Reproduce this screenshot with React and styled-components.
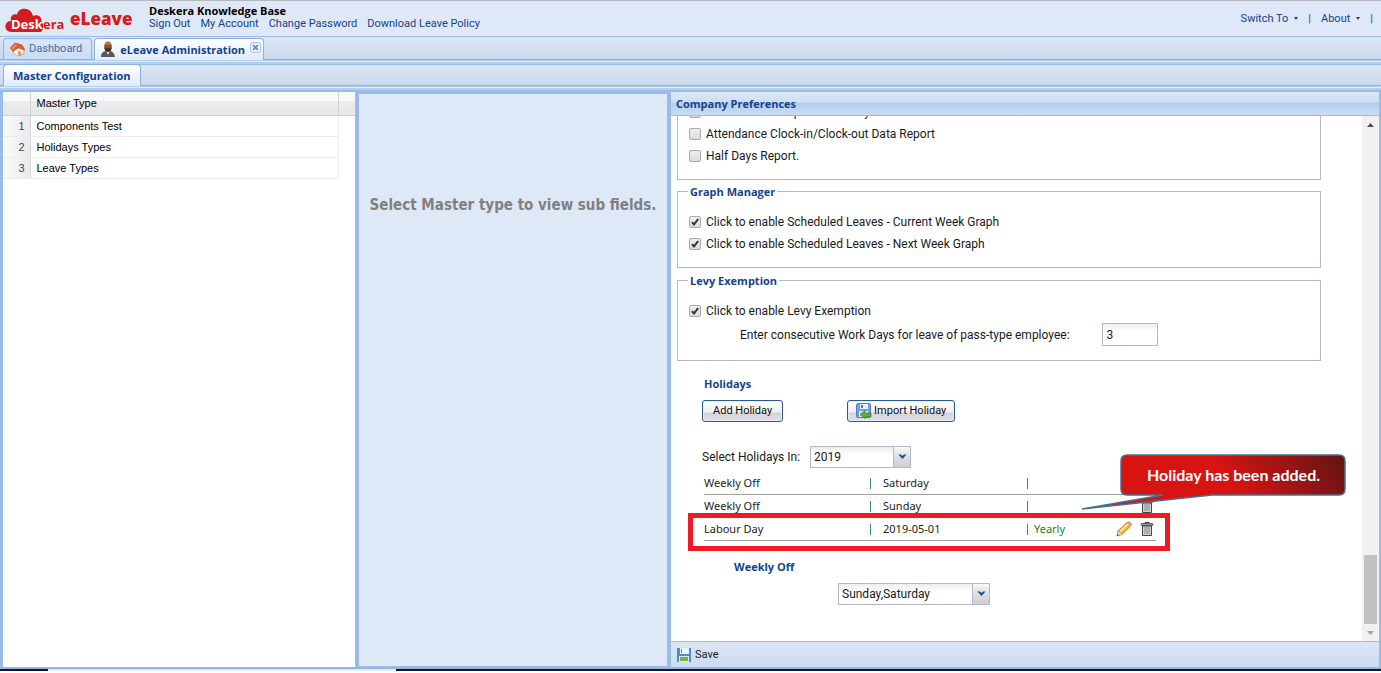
import React from 'react';
import styled, { createGlobalStyle, css } from 'styled-components';

const Global = createGlobalStyle`
  * { box-sizing: border-box; }
  body { margin: 0; background: #fff; }
  #root { font-family: Roboto, "Noto Sans", sans-serif; font-size: 11px; line-height: 16px; color: #1a1a1a; }
  button, input, select { font: inherit; color: inherit; margin: 0; }
  a { color: inherit; text-decoration: none; }
`;

const boldText = css`
  font-family: "Open Sans", "Noto Sans", sans-serif;
  font-size: 11px;
  font-weight: 700;
`;

const Page = styled.div`
  height: 100vh;
  min-height: 600px;
  display: flex;
  flex-direction: column;
  background: #dfe8f6;
  border-top: 1px solid #b5b8be;
`;

const Header = styled.header`
  flex: none;
  height: 35px;
  display: flex;
  align-items: center;
  padding: 0 8px 0 5px;
`;

const Brand = styled.div`
  width: 144px;
  height: 30px;
  display: flex;
  align-items: center;
  gap: 5px;
`;

const BrandText = styled.span`
  font: 800 17px/24px "Open Sans", sans-serif;
  color: #d71920;
`;

const LogoText = styled.text`
  font: 700 13px "Open Sans", sans-serif;
`;

const Account = styled.div`
  flex: 1;
  padding-bottom: 2px;
`;

const Company = styled.div`
  ${boldText}
  line-height: 13px;
  color: #000;
`;

const LinkRow = styled.nav`
  display: flex;
  gap: 10px;
  line-height: 14px;
  color: #15428b;
`;

const MenuRow = styled.nav`
  display: flex;
  align-items: center;
  gap: 10px;
  color: #15428b;
`;

const MenuButton = styled.button`
  display: flex;
  align-items: center;
  gap: 6px;
  padding: 0;
  border: 0;
  background: none;
`;

const Caret = styled.span`
  border: 2px solid transparent;
  border-top: 3px solid #15428b;
  border-bottom: 0;
`;

const TabStrip = styled.div`
  flex: none;
  height: ${(p) => p.$height}px;
  display: flex;
  align-items: flex-end;
  gap: 2px;
  padding: 0 3px;
  border-top: 1px solid #99bbe8;
  border-bottom: 1px solid #8db2e3;
  background: linear-gradient(#dce7f6, #c9d9ec);
`;

const StripEdge = styled.div`
  flex: none;
  height: 4px;
  border-top: 1px solid #b5cdee;
  border-bottom: 2px solid #b5cdee;
  background: #deecfd;
`;

const Tab = styled.button`
  display: flex;
  align-items: center;
  gap: 3px;
  height: 21px;
  padding: 0 9px 0 5px;
  border: 1px solid #8db2e3;
  border-bottom: 0;
  border-radius: 4px 4px 0 0;
  background: linear-gradient(#d9e7f8, #c9dcf5);
  color: #416da3;
  ${(p) => p.$active && css`
    && { ${boldText} }
    height: 22px;
    margin-bottom: -1px;
    padding: 0 9px;
    background: linear-gradient(#fff, #deecfd);
    color: #15428b;
  `}
`;

const TabItem = styled.div`
  display: flex;
  align-items: flex-start;
  height: 22px;
  margin-bottom: -1px;
  padding-right: 2px;
  border: 1px solid #8db2e3;
  border-bottom: 0;
  border-radius: 4px 4px 0 0;
  background: linear-gradient(#fff, #deecfd);
`;

const TabLabel = styled.button`
  && { ${boldText} }
  display: flex;
  align-items: center;
  gap: 4px;
  height: 21px;
  padding: 0 5px;
  border: 0;
  background: none;
  color: #15428b;
`;

const CloseButton = styled.button`
  display: flex;
  width: 11px;
  height: 11px;
  margin-top: 3px;
  padding: 0;
  border: 0;
  background: none;
`;

const Workspace = styled.main`
  flex: 1;
  min-height: 0;
  display: grid;
  grid-template-columns: 352px minmax(200px, 308fr) minmax(500px, 708fr);
  gap: 4px;
  padding: 2px 2px 1px 3px;
  background: #99bbe8;
`;

const GridPanel = styled.section`
  background: #fff;
`;

const MasterTable = styled.table`
  width: 100%;
  border-collapse: collapse;
  table-layout: fixed;
  font: 11px/14px "Liberation Sans", Arial, sans-serif;
  color: #000;
`;

const HeadCell = styled.th`
  width: ${(p) => p.$width};
  height: 23px;
  padding: 0 6px;
  font-weight: 400;
  text-align: left;
  background: linear-gradient(#f9f9f9 40%, #ececee 41%, #e6e7e9);
  border-right: 1px solid #d0d0d0;
  border-bottom: 1px solid #d0d0d0;
  &:last-child { border-right: 0; }
`;

const NumberCell = styled.td`
  height: 21px;
  padding: 0 5px;
  text-align: right;
  color: #444;
  background: linear-gradient(90deg, #fbfbfb, #e9eaec);
  border-bottom: 1px solid #ededed;
  border-right: 1px solid #d5d7da;
`;

const NameCell = styled.td`
  padding: 0 6px;
  border-bottom: 1px solid #ededed;
  border-right: 1px solid #ededed;
`;

const SubPanel = styled.section`
  margin: 2px 0 1px;
  padding: 101px 8px 0;
  background: #dfe8f6;
  text-align: center;
`;

const Hint = styled.h2`
  margin: 0;
  font: 700 15px/20px "DejaVu Sans Condensed", "DejaVu Sans", sans-serif;
  color: #808080;
`;

const Preferences = styled.section`
  display: flex;
  flex-direction: column;
  min-height: 0;
  background: #fff;
`;

const PanelTitle = styled.h2`
  ${boldText}
  flex: none;
  height: 24px;
  margin: 0;
  padding: 0 5px;
  line-height: 23px;
  color: #15428b;
  background: linear-gradient(#dbe8f7, #cddff4 44%, #b5cdee 48%, #cbdcf3);
  border-bottom: 1px solid #99bbe8;
`;

const ScrollArea = styled.div`
  flex: 1;
  min-height: 0;
  display: flex;
`;

const ScrollContent = styled.div`
  flex: 1;
  min-width: 0;
  display: flex;
  flex-direction: column;
  justify-content: flex-end;
  overflow: hidden;
  padding: 0 41px 36px 6px;
  font-size: 12px;
`;

const ScrollBar = styled.div`
  flex: none;
  width: 17px;
  display: flex;
  flex-direction: column;
  justify-content: flex-end;
  align-items: center;
  background: #f1f1f1;
`;

const ScrollThumb = styled.div`
  width: 13px;
  height: 69px;
  background: #c1c1c1;
`;

const ScrollTrack = styled.div`
  flex: 1;
`;

const ScrollArrow = styled.div`
  height: 17px;
  display: flex;
  align-items: center;
`;

const Group = styled.fieldset`
  flex: none;
  min-width: 0;
  margin: 0 0 ${(p) => p.$after}px;
  padding: ${(p) => p.$top}px 11px ${(p) => p.$bottom}px;
  border: 1px solid #b5b8c8;
`;

const Legend = styled.legend`
  ${boldText}
  padding: 0 2px;
  margin-left: -1px;
  line-height: 16px;
  color: #15428b;
`;

const CheckRow = styled.label`
  display: flex;
  align-items: center;
  gap: 5px;
  height: 22px;
`;

const Check = styled.input`
  appearance: none;
  width: 12px;
  height: 12px;
  border: 1px solid #a9a9a9;
  border-radius: 2px;
  background: linear-gradient(#eee, #dcdcdc);
  &:checked {
    background: url("data:image/svg+xml,%3Csvg xmlns='http://www.w3.org/2000/svg' viewBox='0 0 10 10'%3E%3Cpath d='M2 5.2 4 7.4 8.2 2' fill='none' stroke='%23333' stroke-width='2'/%3E%3C/svg%3E"), linear-gradient(#eee, #dcdcdc);
  }
`;

const FieldRow = styled.label`
  display: flex;
  align-items: center;
  gap: 32px;
  height: 26px;
  padding-left: 51px;
`;

const NumberBox = styled.input`
  width: 56px;
  height: 23px;
  padding: 0 4px;
  border: 1px solid #b5b8c8;
  background: linear-gradient(#eceeee, #fff 8px);
`;

const Holidays = styled.section`
  flex: none;
  padding-left: 25px;
`;

const Heading = styled.h3`
  ${boldText}
  margin: 0;
  padding-left: ${(p) => p.$indent}px;
  line-height: 16px;
  color: #15428b;
`;

const ButtonRow = styled.div`
  display: flex;
  gap: 64px;
  margin: 8px 0 24px;
  font-size: 11px;
`;

const PushButton = styled.button`
  display: flex;
  align-items: center;
  justify-content: center;
  gap: 2px;
  height: 22px;
  padding: 0 ${(p) => (p.$icon ? 8 : 10)}px;
  border: 1px solid #2b5a8c;
  border-radius: 3px;
  background: linear-gradient(#fff, #f0f0f0 55%, #d4d4d8 60%, #e0e0e4);
  box-shadow: inset 0 0 0 1px #e8eef5;
  color: #111;
`;

const SelectRow = styled.label`
  display: flex;
  align-items: center;
  gap: 10px;
  margin-left: ${(p) => p.$indent}px;
  margin-top: ${(p) => p.$before}px;
`;

const SelectBox = styled.span`
  display: flex;
  position: relative;
  width: ${(p) => p.$width}px;
  height: 22px;
  border: 1px solid #b5b8c8;
  background: linear-gradient(#eceeee, #fff 8px);
`;

const Select = styled.select`
  appearance: none;
  width: 100%;
  padding: 0 20px 0 3px;
  border: 0;
  background: none;
`;

const Trigger = styled.span`
  position: absolute;
  top: 0;
  right: 0;
  width: 17px;
  height: 20px;
  display: flex;
  align-items: center;
  justify-content: center;
  border-left: 1px solid #b5b8c8;
  background: linear-gradient(#f8f8f8, #dcdde0 50%, #d0d0d4);
  pointer-events: none;
`;

const TableWrap = styled.div`
  position: relative;
  width: 452px;
  margin: 4px 0 18px 2px;
`;

const HolidayTable = styled.table`
  width: 100%;
  border-collapse: collapse;
  table-layout: fixed;
  font-family: "Noto Sans", "Open Sans", sans-serif;
  font-size: 11px;
`;

const Cell = styled.td`
  width: ${(p) => p.$width};
  height: 23px;
  padding: 0;
  border-bottom: 1px solid #a0a0a0;
  color: ${(p) => (p.$green ? '#1b7f1b' : '#222')};
`;

const Bar = styled.span`
  display: inline-block;
  width: 1px;
  height: 11px;
  margin-right: ${(p) => p.$gap}px;
  vertical-align: -2px;
  background: #3e8298;
`;

const Actions = styled.div`
  display: flex;
  justify-content: flex-end;
  align-items: center;
  gap: 8px;
  padding-right: 2px;
`;

const IconButton = styled.button`
  display: flex;
  padding: 0;
  border: 0;
  background: none;
`;

const Highlight = styled.div`
  position: absolute;
  inset: 41px -14px -10px -16px;
  border: 5px solid #ed1c24;
  pointer-events: none;
`;

const Callout = styled.div`
  position: absolute;
  top: -18px;
  left: 376px;
  width: 266px;
  height: 58px;
`;

const CalloutText = styled.div`
  position: absolute;
  top: 0;
  right: 0;
  width: 225px;
  line-height: 42px;
  text-align: center;
  font-family: Lato, sans-serif;
  font-size: 16px;
  font-weight: 700;
  color: #fff;
`;

const Toolbar = styled.footer`
  flex: none;
  height: 26px;
  display: flex;
  align-items: center;
  padding: 0 6px;
  border-top: 1px solid #99bbe8;
  background: linear-gradient(#dbe6f5, #cddcf0);
`;

const SaveButton = styled.button`
  display: flex;
  align-items: center;
  gap: 4px;
  padding: 0;
  border: 0;
  background: none;
`;

const Desktop = styled.div`
  flex: none;
  display: grid;
  grid-template-columns: 48fr 348fr 985fr;
  height: 5px;
  border-top: 1px solid #8db2e3;
  border-bottom: 2px solid #fff;
`;

const DesktopPart = styled.div`
  background: ${(p) => (p.$dark ? '#15161c' : '#ececec')};
`;

const CloudLogo = () => (
  <svg width="60" height="28" viewBox="0 0 60 28" role="img" aria-label="Deskera">
    <path d="M7 27C2 27 0 24 0.500 20.500C1 17.500 3 16 6 16C5 11 8 8.500 12 9.500C13 5 17 3 21 4C25 4.500 27 7 28 11C33 9 37 12 36.500 17C39 19 39 24 36 27Z" fill="#d71920" />
    <LogoText x="6" y="24" fill="#fff">Desk</LogoText>
    <LogoText x="38" y="24" fill="#d71920">era</LogoText>
  </svg>
);

const HomeIcon = () => (
  <svg width="17" height="16" viewBox="0 0 17 16" aria-hidden="true">
    <path d="M4 8 9 5 15 9V13L9 15 4 12Z" fill="#e8e8ee" stroke="#9a9ab0" strokeWidth=".7" />
    <path d="M1 7 6 2 13 4 16 9 10 7 5 11Z" fill="#e0602c" stroke="#b5431b" strokeWidth=".6" />
    <path d="M5 10 10 7 9 14.500 5 12.500Z" fill="#f4f4f8" />
    <path d="M9 10 12 11V15L9 14Z" fill="#e0a23c" />
    <path d="M2 7 6 3 8 4 4 9Z" fill="#f08a50" />
  </svg>
);

const PersonIcon = () => (
  <svg width="16" height="17" viewBox="0 0 16 17" aria-hidden="true">
    <path d="M1 16C1 11 4 10 8 10S14 11 15 16Z" fill="#55555c" />
    <path d="M6 10 8 14 10 10Z" fill="#e8e8ee" />
    <ellipse cx="8" cy="5.500" rx="3.800" ry="5" fill="#8a5526" />
    <path d="M4.500 6.500Q8 8 11.500 6.500Q11.500 11 8 11T4.500 6.500" fill="#4b2c15" />
    <path d="M4.800 3.500Q8-1 11.200 3.500Z" fill="#c98a3a" />
  </svg>
);

const CloseIcon = () => (
  <svg width="11" height="11" viewBox="0 0 11 11" aria-hidden="true">
    <rect x=".5" y=".5" width="10" height="10" rx="2" fill="#e8f1fc" stroke="#a9c3e6" />
    <path d="M3 3 8 8M8 3 3 8" stroke="#6688b8" strokeWidth="1.600" />
  </svg>
);

const Chevron = () => (
  <svg width="9" height="6" viewBox="0 0 9 6" aria-hidden="true">
    <path d="M0.500 0.500H3L4.500 2 6 0.500H8.500L4.500 5Z" fill="#22478a" />
  </svg>
);

const ImportIcon = () => (
  <svg width="16" height="16" viewBox="0 0 16 16" aria-hidden="true">
    <rect x=".5" y=".5" width="14" height="14" rx="1.500" fill="#6fa3e2" stroke="#4a80c6" />
    <rect x="4" y="1" width="8" height="5" fill="#e6eefa" />
    <rect x="5" y="2" width="2" height="3" fill="#4a80c6" />
    <rect x="3" y="8" width="9" height="6" fill="#dce9f8" />
    <path d="M4 11.500 9 7.500V10H15V14H9V15.500Z" fill="#5cae3d" stroke="#357f22" strokeWidth=".7" />
  </svg>
);

const SaveIcon = () => (
  <svg width="14" height="14" viewBox="0 0 14 14" aria-hidden="true">
    <path d="M0 0H14V14H0Z" fill="#4f8ace" />
    <rect x="3" y="0" width="9" height="6" fill="#edf3fb" />
    <rect x="4" y="1" width="1" height="4" fill="#4f8ace" />
    <rect x="2" y="8" width="10" height="6" fill="#dce8f7" />
    <rect x="3" y="9" width="8" height="4" fill="#73b63f" />
  </svg>
);

const PencilIcon = () => (
  <svg width="16" height="16" viewBox="0 0 16 16" aria-hidden="true">
    <path d="M1 15 2 10 11 1.500Q13 .5 14.500 2T14.500 5L6 13.500Z" fill="#f2b93c" stroke="#a06b26" strokeWidth=".9" />
    <path d="M4 10.500 12 3" stroke="#fbe58b" strokeWidth="2" />
    <path d="M11 2 14 5 15 4 12 1Z" fill="#f0a6a0" />
    <path d="M2 10.500 5.500 13.500 1 15Z" fill="#eed8b4" />
    <path d="M1 15 1.500 13 3 14.300Z" fill="#3a2a20" />
  </svg>
);

const TrashIcon = () => (
  <svg width="14" height="14" viewBox="0 0 14 14" aria-hidden="true">
    <path d="M5 1.500V.5H9V1.500" fill="none" stroke="#444" />
    <rect x="1" y="1.500" width="12" height="2" rx="1" fill="#9a9a9a" stroke="#444" strokeWidth=".8" />
    <path d="M2.500 4H11.500V13.500H2.500Z" fill="#d4d4d4" stroke="#444" />
    <path d="M5 5V12M7 5V12M9 5V12" stroke="#858585" />
  </svg>
);

const Arrow = ({ up }) => (
  <svg width="7" height="4" viewBox="0 0 7 4" aria-hidden="true">
    {up ? <path d="M0 4 3.500 0 7 4Z" fill="#505050" /> : <path d="M0 0H7L3.500 4Z" fill="#a3a3a3" />}
  </svg>
);

const CheckField = ({ children, checked }) => (
  <CheckRow>
    <Check type="checkbox" defaultChecked={checked} />
    {children}
  </CheckRow>
);

const Dropdown = ({ value, width, label }) => (
  <SelectBox $width={width}>
    <Select defaultValue={value} aria-label={label}>
      <option>{value}</option>
    </Select>
    <Trigger><Chevron /></Trigger>
  </SelectBox>
);

const masterTypes = ['Components Test', 'Holidays Types', 'Leave Types'];

const holidays = [
  { name: 'Weekly Off', day: 'Saturday' },
  { name: 'Weekly Off', day: 'Sunday' },
  { name: 'Labour Day', day: '2019-05-01', repeat: 'Yearly', editable: true },
];

export default function App() {
  return (
    <>
      <Global />
      <Page>
        <Header>
          <Brand>
            <CloudLogo />
            <BrandText>eLeave</BrandText>
          </Brand>
          <Account>
            <Company>Deskera Knowledge Base</Company>
            <LinkRow>
              <a href="#signout">Sign Out</a>
              <a href="#account">My Account</a>
              <a href="#password">Change Password</a>
              <a href="#policy">Download Leave Policy</a>
            </LinkRow>
          </Account>
          <MenuRow>
            <MenuButton>Switch To <Caret /></MenuButton>
            <span>|</span>
            <MenuButton>About <Caret /></MenuButton>
            <span>|</span>
          </MenuRow>
        </Header>

        <TabStrip $height={24}>
          <Tab><HomeIcon />Dashboard</Tab>
          <TabItem>
            <TabLabel><PersonIcon />eLeave Administration</TabLabel>
            <CloseButton aria-label="Close tab"><CloseIcon /></CloseButton>
          </TabItem>
        </TabStrip>
        <StripEdge />
        <TabStrip $height={22}>
          <Tab $active>Master Configuration</Tab>
        </TabStrip>
        <StripEdge />

        <Workspace>
          <GridPanel>
            <MasterTable>
              <thead>
                <tr>
                  <HeadCell $width="27px" />
                  <HeadCell>Master Type</HeadCell>
                  <HeadCell $width="17px" />
                </tr>
              </thead>
              <tbody>
                {masterTypes.map((name, i) => (
                  <tr key={name}>
                    <NumberCell>{i + 1}</NumberCell>
                    <NameCell>{name}</NameCell>
                  </tr>
                ))}
              </tbody>
            </MasterTable>
          </GridPanel>

          <SubPanel>
            <Hint>Select Master type to view sub fields.</Hint>
          </SubPanel>

          <Preferences>
            <PanelTitle>Company Preferences</PanelTitle>
            <ScrollArea>
              <ScrollContent>
                <Group $top={12} $bottom={12} $after={4}>
                  <CheckField>Leave Details Report Summary</CheckField>
                  <CheckField>Attendance Clock-in/Clock-out Data Report</CheckField>
                  <CheckField>Half Days Report.</CheckField>
                </Group>
                <Group $top={11} $bottom={12} $after={5}>
                  <Legend>Graph Manager</Legend>
                  <CheckField checked>Click to enable Scheduled Leaves - Current Week Graph</CheckField>
                  <CheckField checked>Click to enable Scheduled Leaves - Next Week Graph</CheckField>
                </Group>
                <Group $top={11} $bottom={12} $after={15}>
                  <Legend>Levy Exemption</Legend>
                  <CheckField checked>Click to enable Levy Exemption</CheckField>
                  <FieldRow>
                    Enter consecutive Work Days for leave of pass-type employee:
                    <NumberBox defaultValue="3" />
                  </FieldRow>
                </Group>

                <Holidays>
                  <Heading $indent={2}>Holidays</Heading>
                  <ButtonRow>
                    <PushButton>Add Holiday</PushButton>
                    <PushButton $icon><ImportIcon />Import Holiday</PushButton>
                  </ButtonRow>
                  <SelectRow $indent={0} $before={0}>
                    Select Holidays In:
                    <Dropdown value="2019" width={101} />
                  </SelectRow>
                  <TableWrap>
                    <HolidayTable>
                      <tbody>
                        {holidays.map((h) => (
                          <tr key={h.day}>
                            <Cell $width="166px">{h.name}</Cell>
                            <Cell $width="157px"><Bar $gap={12} />{h.day}</Cell>
                            <Cell $width="70px" $green><Bar $gap={6} />{h.repeat}</Cell>
                            <Cell>
                              <Actions>
                                {h.editable && <IconButton aria-label="Edit holiday"><PencilIcon /></IconButton>}
                                <IconButton aria-label="Delete holiday"><TrashIcon /></IconButton>
                              </Actions>
                            </Cell>
                          </tr>
                        ))}
                      </tbody>
                    </HolidayTable>
                    <Highlight />
                    <Callout role="status">
                      <svg width="266" height="58" viewBox="0 0 266 58" aria-hidden="true">
                        <defs>
                          <linearGradient id="callout" x1="0" y1="0.150" x2="1" y2="0">
                            <stop offset="0.500" stopColor="#d81412" />
                            <stop offset="1" stopColor="#5f1414" />
                          </linearGradient>
                        </defs>
                        <path
                          d="M47 1H259Q265 1 265 7V35Q265 41 259 41H132L2 55 83 41H47Q41 41 41 35V7Q41 1 47 1Z"
                          fill="url(#callout)"
                          stroke="#41719c"
                          strokeWidth="1.500"
                        />
                      </svg>
                      <CalloutText>Holiday has been added.</CalloutText>
                    </Callout>
                  </TableWrap>
                  <Heading $indent={32}>Weekly Off</Heading>
                  <SelectRow $indent={136} $before={8}>
                    <Dropdown value="Sunday,Saturday" width={152} label="Weekly Off" />
                  </SelectRow>
                </Holidays>
              </ScrollContent>
              <ScrollBar aria-hidden="true">
                <ScrollArrow><Arrow up /></ScrollArrow>
                <ScrollTrack />
                <ScrollThumb />
                <ScrollArrow><Arrow /></ScrollArrow>
              </ScrollBar>
            </ScrollArea>
            <Toolbar>
              <SaveButton><SaveIcon />Save</SaveButton>
            </Toolbar>
          </Preferences>
        </Workspace>
        <Desktop>
          <DesktopPart $dark />
          <DesktopPart />
          <DesktopPart $dark />
        </Desktop>
      </Page>
    </>
  );
}
